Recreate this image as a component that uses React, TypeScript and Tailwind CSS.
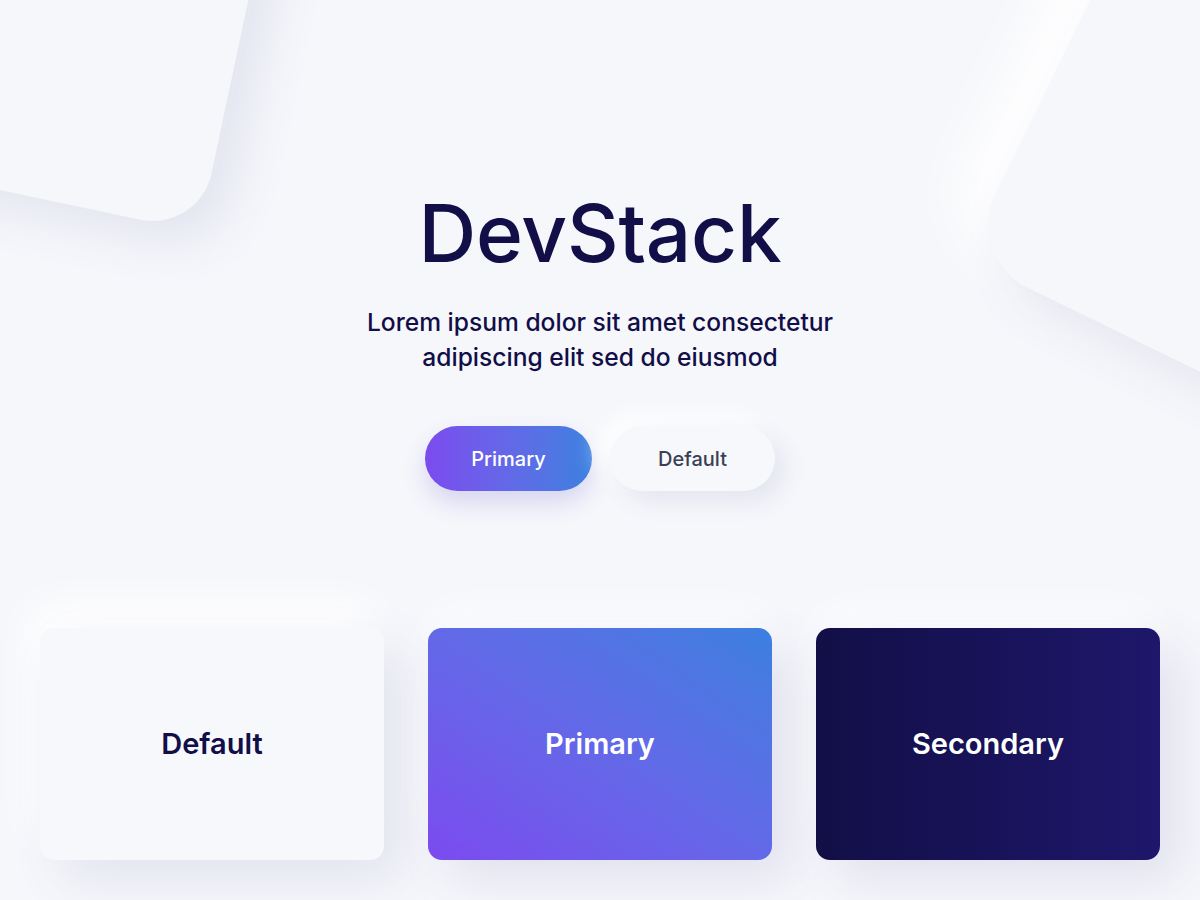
import React from "react";

export default function App() {
  return (
    <div
      className="relative w-[1200px] h-[900px] overflow-hidden bg-[#f6f7fb]"
      style={{ fontFamily: "Inter, 'Noto Sans', sans-serif" }}
    >
      {/* decorative shapes */}
      <div className="absolute left-[-155px] top-[-205px] w-[400px] h-[400px] rounded-[60px] bg-[#f6f7fb] rotate-[12deg] shadow-[24px_16px_50px_#e2e4ef,-24px_-16px_50px_#ffffff]" />
      <div className="absolute left-[1049px] top-[-108px] w-[500px] h-[500px] rounded-[70px] bg-[#f6f7fb] rotate-[26deg] shadow-[27px_9px_50px_#e2e4ee,-40px_-14px_60px_#ffffff]" />

      <div className="relative flex flex-col items-center pt-[183px]">
        <h1 className="text-[80px] leading-[100px] font-medium tracking-[-0.2px] text-[#110e48]">
          DevStack
        </h1>
        <p className="mt-[22px] text-[24.6px] leading-[35px] font-medium text-center text-[#110e48]">
          Lorem ipsum dolor sit amet consectetur
          <br />
          adipiscing elit sed do eiusmod
        </p>
        <div className="mt-[51px] flex gap-[18px]">
          <button className="w-[167px] h-[65px] rounded-full bg-gradient-to-r from-[#7b4aef] to-[#3a80e0] text-white text-[20px] font-medium shadow-[0_12px_24px_#d6d5f0]">
            Primary
          </button>
          <button className="w-[165px] h-[65px] rounded-full bg-[#f7f8fc] text-[#3a3f55] text-[20px] font-medium shadow-[10px_10px_24px_#e3e5ef,-10px_-10px_24px_#ffffff]">
            Default
          </button>
        </div>
      </div>

      <div className="relative mt-[137px] px-[40px] flex gap-[44px]">
        <div className="w-[344px] h-[232px] rounded-[14px] bg-[#f7f8fc] flex items-center justify-center shadow-[20px_20px_50px_#e2e4ef,-10px_-24px_40px_#ffffff]">
          <span className="text-[29px] font-semibold text-[#110e48]">Default</span>
        </div>
        <div className="w-[344px] h-[232px] rounded-[14px] bg-gradient-to-tr from-[#7b4aef] to-[#3a80e0] flex items-center justify-center shadow-[20px_20px_50px_#e0e1ee,0_-24px_40px_-10px_#ffffff]">
          <span className="text-[29px] font-semibold text-white">Primary</span>
        </div>
        <div className="w-[344px] h-[232px] rounded-[14px] bg-gradient-to-r from-[#120f47] to-[#1e176b] flex items-center justify-center shadow-[20px_20px_50px_#e0e1ee,0_-24px_40px_-10px_#ffffff]">
          <span className="text-[29px] font-semibold text-white">Secondary</span>
        </div>
      </div>
    </div>
  );
}
